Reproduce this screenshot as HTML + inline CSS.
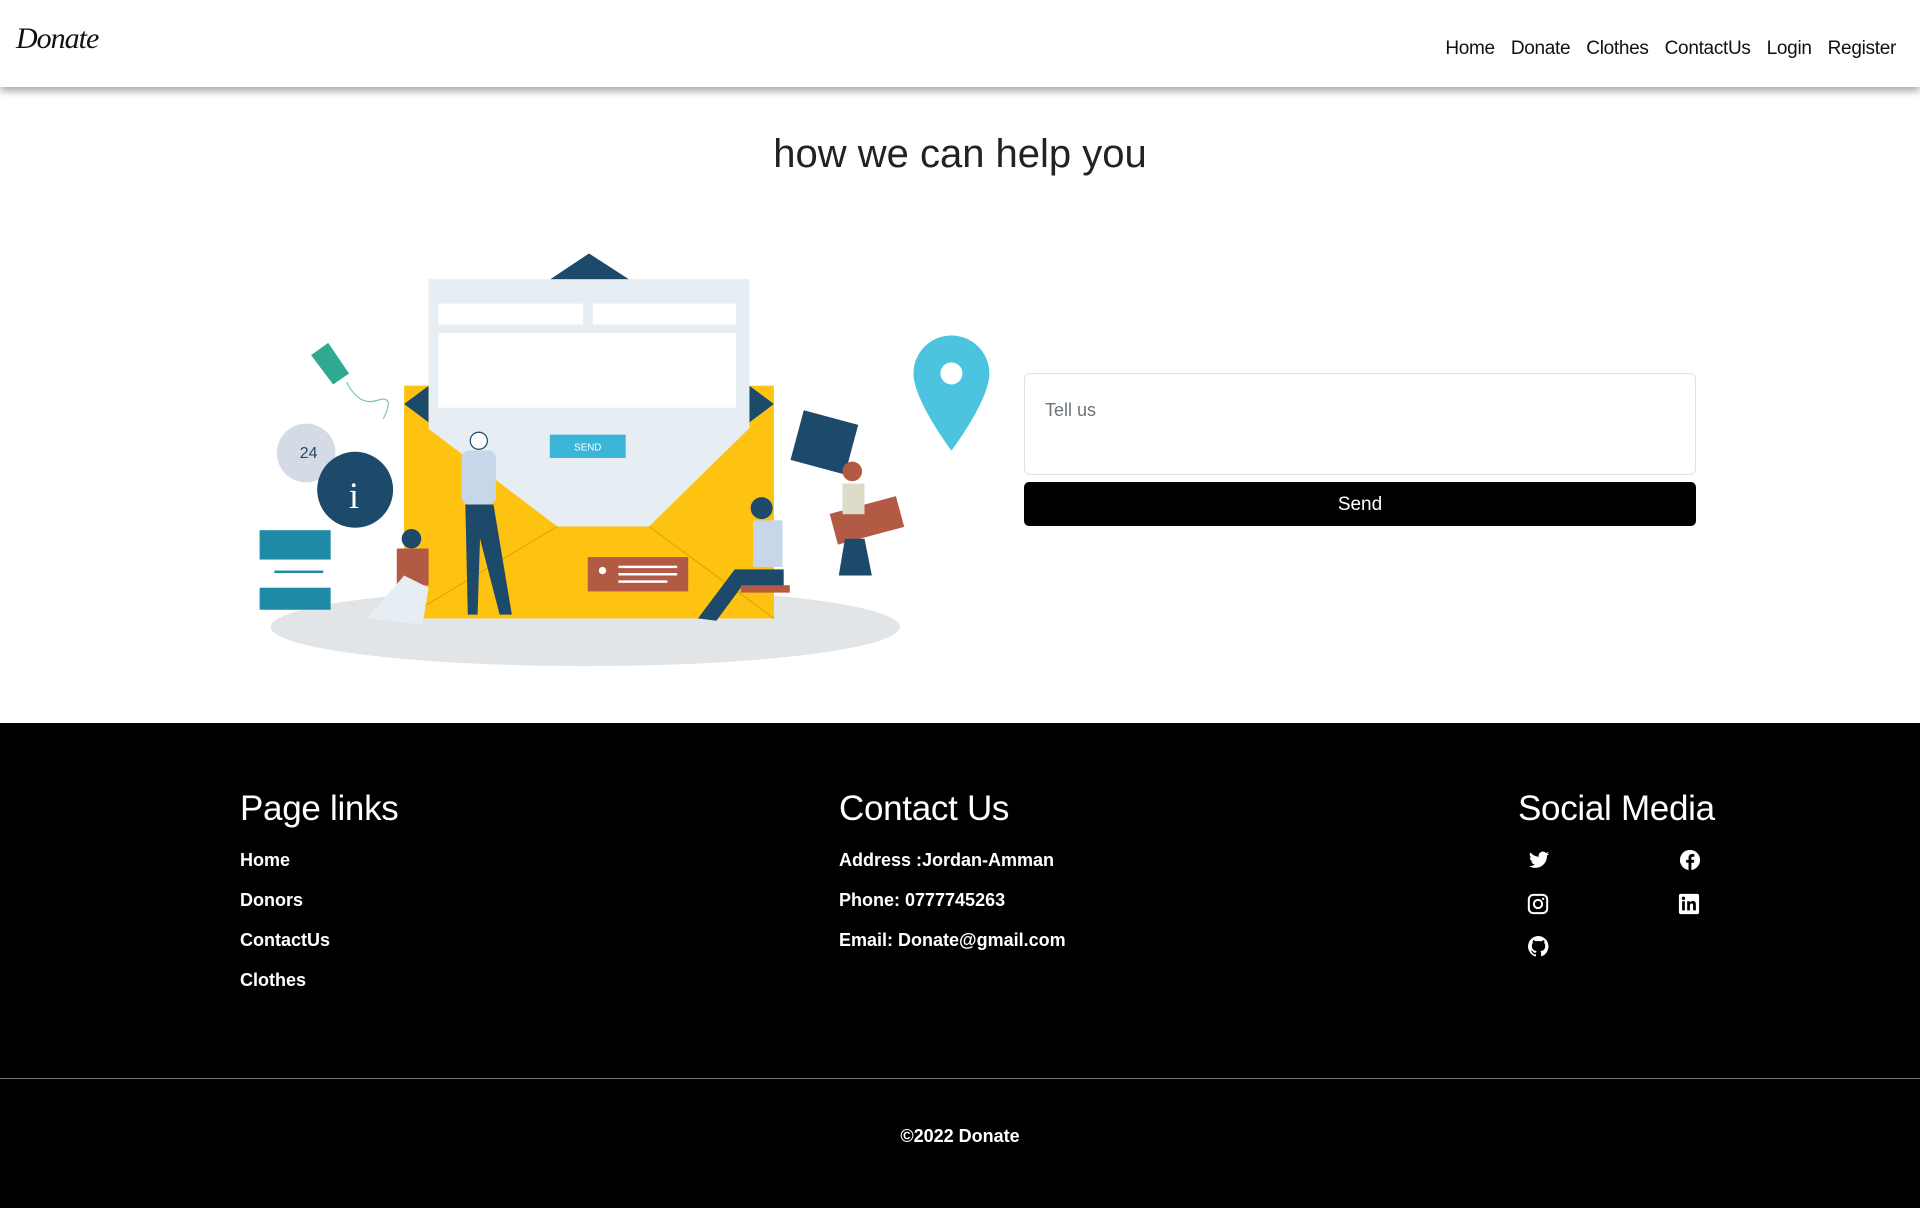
<!DOCTYPE html>
<html><head><meta charset="utf-8"><style>
*{margin:0;padding:0;box-sizing:border-box}
body{width:1920px;height:1208px;position:relative;background:#fff;font-family:"Liberation Sans",sans-serif;overflow:hidden}
.nav{position:absolute;left:0;top:0;width:1920px;height:87px;background:#fff;box-shadow:0 4px 8px rgba(0,0,0,.35);z-index:2}
.logo{position:absolute;left:16px;top:22px;font-family:"Liberation Serif",serif;font-style:italic;font-size:30px;color:#111;letter-spacing:-1px}
.links{position:absolute;right:24px;top:38px;font-size:19px;color:#111;letter-spacing:-0.3px}
.links span{margin-left:16px}
h1{position:absolute;top:132px;left:0;width:1920px;text-align:center;font-weight:normal;font-size:40px;color:#222}
.ta{position:absolute;left:1024px;top:373px;width:672px;height:102px;border:1px solid #dee2e6;border-radius:6px;padding:26px 20px;font-size:18px;color:#6c757d}
.btn{position:absolute;left:1024px;top:482px;width:672px;height:44px;background:#000;border-radius:5px;color:#fff;font-size:19px;text-align:center;line-height:46px}
.foot{position:absolute;left:0;top:723px;width:1920px;height:485px;background:#000;color:#fff}
.foot h2{position:absolute;font-weight:normal;font-size:35px;top:66px;letter-spacing:-0.3px}
.foot p{position:absolute;font-size:18px;font-weight:bold}
.hr{position:absolute;left:0;top:355px;width:1920px;height:1px;background:#777}
</style></head><body>
<div class="nav"><div class="logo">Donate</div>
<div class="links"><span>Home</span><span>Donate</span><span>Clothes</span><span>ContactUs</span><span>Login</span><span>Register</span></div></div>
<h1>how we can help you</h1>
<svg style="position:absolute;left:0;top:0" width="1920" height="1208" viewBox="0 0 1568 986.6">
<ellipse cx="478" cy="512" rx="257" ry="32" fill="#e2e5e8"/>
<rect x="330" y="315" width="302" height="190" fill="#fec311"/>
<polygon points="330,330 350,315 350,345" fill="#1d4a6b"/>
<polygon points="632,330 612,315 612,345" fill="#1d4a6b"/>
<polygon points="448,229 481,207 515,229" fill="#1d4a6b"/>
<rect x="350" y="228" width="262" height="202" fill="#e6edf3"/>
<rect x="358" y="248" width="118" height="17" fill="#fff"/>
<rect x="484" y="248" width="117" height="17" fill="#fff"/>
<rect x="358" y="272" width="243" height="61" fill="#fff"/>
<rect x="449" y="355" width="62" height="19" fill="#3bb5d8"/>
<text x="480" y="368" font-size="8" fill="#fff" text-anchor="middle" font-family="Liberation Sans">SEND</text>
<polygon points="330,335 455,430 530,430 632,330 632,505 330,505" fill="#fec311"/>
<line x1="330" y1="505" x2="455" y2="430" stroke="#e0a800"/><line x1="632" y1="505" x2="530" y2="430" stroke="#e0a800"/>
<rect x="480" y="455" width="82" height="28" fill="#b35a45"/>
<rect x="505" y="462" width="48" height="2" fill="#fff"/><rect x="505" y="468" width="48" height="2" fill="#fff"/><rect x="505" y="474" width="40" height="2" fill="#fff"/>
<circle cx="492" cy="466" r="3" fill="#fff"/>
<path d="M746,305 a31,31 0 0 1 62,0 c0,22 -31,63 -31,63 c0,0 -31,-41 -31,-63z" fill="#4cc3df"/>
<circle cx="777" cy="305" r="9" fill="#fff"/>
<polygon points="254,290 268,280 285,305 272,314" fill="#2fa98f"/>
<path d="M283,312 q10,20 25,15 q15,-5 5,15" fill="none" stroke="#7bc6b3" stroke-width="1"/>
<circle cx="250" cy="370" r="24" fill="#d5dbe6"/><text x="252" y="374" font-size="13" fill="#1d4a6b" text-anchor="middle" font-family="Liberation Sans">24</text>
<circle cx="290" cy="400" r="31" fill="#1d4a6b"/>
<text x="289" y="415" font-size="30" fill="#fff" text-anchor="middle" font-family="Liberation Serif">i</text>
<rect x="212" y="433" width="58" height="24" fill="#1e8aa6"/>
<rect x="224" y="466" width="40" height="2" fill="#1e8aa6"/>
<rect x="212" y="480" width="58" height="18" fill="#1e8aa6"/>
<g transform="rotate(15 672 362)"><rect x="650" y="340" width="46" height="42" fill="#1d4a6b"/></g>
<g transform="rotate(-15 708 425)"><rect x="680" y="412" width="56" height="26" fill="#b35a45"/></g>
<circle cx="391" cy="360" r="7" fill="#fff" stroke="#1d4a6b"/>
<rect x="377" y="368" width="28" height="44" rx="6" fill="#c8d6ea"/>
<polygon points="380,412 403,412 418,502 408,502 392,440 390,502 382,502" fill="#1d4a6b"/>
<circle cx="336" cy="440" r="8" fill="#1d4a6b"/>
<rect x="324" y="448" width="26" height="30" fill="#b35a45"/>
<polygon points="300,505 330,470 350,480 345,510" fill="#e6edf3"/>
<circle cx="622" cy="415" r="9" fill="#1d4a6b"/>
<rect x="615" y="425" width="24" height="38" fill="#c8d6ea"/>
<polygon points="570,505 600,465 640,465 640,480 605,480 585,507" fill="#1d4a6b"/>
<rect x="605" y="478" width="40" height="6" fill="#b35a45"/>
<circle cx="696" cy="385" r="8" fill="#b35a45"/>
<rect x="688" y="395" width="18" height="25" fill="#dcdcc8"/>
<polygon points="690,440 706,440 712,470 685,470" fill="#1d4a6b"/>
</svg>
<div class="ta">Tell us</div>
<div class="btn">Send</div>
<div class="foot">
<h2 style="left:240px">Page links</h2>
<p style="left:240px;top:127px">Home</p><p style="left:240px;top:167px">Donors</p><p style="left:240px;top:207px">ContactUs</p><p style="left:240px;top:247px">Clothes</p>
<h2 style="left:839px">Contact Us</h2>
<p style="left:839px;top:127px">Address :Jordan-Amman</p><p style="left:839px;top:167px">Phone: 0777745263</p><p style="left:839px;top:207px">Email: Donate@gmail.com</p>
<h2 style="left:1518px">Social Media</h2>
<svg style="position:absolute;left:1528px;top:126px" width="22" height="22" viewBox="0 0 24 24"><path fill="#fff" d="M23 5c-.8.4-1.7.6-2.6.7.9-.6 1.6-1.4 2-2.5-.9.5-1.9.9-2.900 1.100A4.5 4.5 0 0 0 11.8 8.4 12.8 12.8 0 0 1 2.5 3.7a4.5 4.5 0 0 0 1.4 6c-.7 0-1.4-.2-2-.6 0 2.2 1.5 4 3.6 4.4-.7.2-1.4.2-2 .1.6 1.8 2.3 3.1 4.2 3.1A9 9 0 0 1 1 18.6 12.8 12.8 0 0 0 7.9 20.6c8.3 0 12.8-6.9 12.8-12.8v-.6c.9-.6 1.6-1.4 2.3-2.2z"/></svg>
<svg style="position:absolute;left:1679px;top:126px" width="22" height="22" viewBox="0 0 24 24"><circle cx="12" cy="12" r="11" fill="#fff"/><path fill="#000" d="M13.5 23v-8h2.7l.4-3.2h-3.1V9.9c0-.9.3-1.5 1.6-1.5h1.6V5.6c-.3 0-1.3-.1-2.4-.1-2.3 0-3.9 1.4-3.9 4v2.3H7.8V15h2.6v8z"/></svg>
<svg style="position:absolute;left:1527px;top:170px" width="22" height="22" viewBox="0 0 24 24"><rect x="2" y="2" width="20" height="20" rx="5" fill="none" stroke="#fff" stroke-width="2.2"/><circle cx="12" cy="12" r="4.5" fill="none" stroke="#fff" stroke-width="2.2"/><circle cx="17.6" cy="6.4" r="1.3" fill="#fff"/></svg>
<svg style="position:absolute;left:1678px;top:170px" width="22" height="22" viewBox="0 0 24 24"><rect x="1" y="1" width="22" height="22" rx="2" fill="#fff"/><rect x="4.5" y="9" width="3" height="10" fill="#000"/><circle cx="6" cy="5.8" r="1.8" fill="#000"/><path fill="#000" d="M10 9h3v1.5c.5-1 1.7-1.8 3.2-1.8 3 0 3.3 2 3.3 4.3V19h-3v-5c0-1.2 0-2.5-1.6-2.5S13 12.7 13 14v5h-3z"/></svg>
<svg style="position:absolute;left:1527px;top:212px" width="23" height="23" viewBox="0 0 24 24"><path fill="#fff" d="M12 1a11 11 0 0 0-3.5 21.4c.6.1.8-.2.8-.5v-2c-3 .7-3.7-1.4-3.7-1.4-.5-1.3-1.2-1.6-1.2-1.6-1-.7.1-.7.1-.7 1.1.1 1.7 1.1 1.7 1.1 1 1.7 2.6 1.2 3.2.9.1-.7.4-1.2.7-1.5-2.4-.3-5-1.2-5-5.4 0-1.2.4-2.2 1.1-2.9-.1-.3-.5-1.4.1-2.9 0 0 .9-.3 3 1.1a10.4 10.4 0 0 1 5.5 0c2.1-1.4 3-1.1 3-1.1.6 1.5.2 2.6.1 2.9.7.7 1.1 1.7 1.1 2.9 0 4.2-2.6 5.1-5 5.4.4.3.7 1 .7 2v3c0 .3.2.6.8.5A11 11 0 0 0 12 1z"/></svg>
<div class="hr"></div>
<p style="left:0;width:1920px;text-align:center;top:403px">©2022 Donate</p>
</div>
</body></html>
